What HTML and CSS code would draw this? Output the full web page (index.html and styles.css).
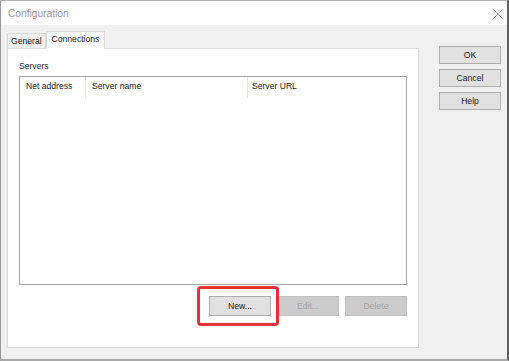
FILE: index.html
```html
<!DOCTYPE html>
<html lang="en">
<head>
    <meta charset="UTF-8">
    <meta name="viewport" content="width=device-width, initial-scale=1.0">
    <title>Configuration</title>
    <link rel="stylesheet" href="styles.css">
</head>
<body>

    <div class="window">
        <div class="titlebar">
            <span class="title">Configuration</span>
            <svg class="close" width="10" height="10" viewBox="0 0 10 10">
                <path d="M0.5 0.5 L9.5 9.5 M9.5 0.5 L0.5 9.5" stroke="#a0a0a0" stroke-width="1" fill="none"/>
            </svg>
        </div>

        <div class="client">
            <div class="left">
                <div class="tabs">
                    <div class="tab">General</div>
                    <div class="tab active">Connections</div>
                </div>
                <div class="panel">
                    <div class="group-label">Servers</div>
                    <div class="listview">
                        <div class="header">
                            <div class="col col-addr">Net address</div>
                            <div class="col col-name">Server name</div>
                            <div class="col col-url">Server URL</div>
                        </div>
                    </div>
                    <div class="list-buttons">
                        <div class="highlight">
                            <button class="btn">New...</button>
                        </div>
                        <button class="btn" disabled>Edit...</button>
                        <button class="btn" disabled>Delete</button>
                    </div>
                </div>
            </div>

            <div class="side-buttons">
                <button class="btn side">OK</button>
                <button class="btn side">Cancel</button>
                <button class="btn side">Help</button>
            </div>
        </div>
    </div>

</body>
</html>
```

FILE: styles.css
```css
body {
    margin: 0;
    background-color: #f0f0f0;
    font-family: "Liberation Sans", Arial, sans-serif;
    font-size: 8.6px;
    color: #1a1a1a;
}
.window {
    width: 509px;
    height: 361px;
    box-sizing: border-box;
    border-left: 1px solid #9a9a9a;
    border-top: 1px solid #b5b5b5;
    border-right: 2px solid #5f5f5f;
    border-bottom: 2px solid #a9a9a9;
    background-color: #f0f0f0;
    display: flex;
    flex-direction: column;
}
.titlebar {
    height: 24px;
    background: #ffffff;
    display: flex;
    align-items: center;
    justify-content: space-between;
    padding: 0 4px 0 7px;
}
.title {
    font-size: 10.2px;
    color: #9a9a9a;
}
.close {
    margin-top: 1px;
}
.client {
    flex: 1;
    display: flex;
    padding: 6px 0 0 6px;
}
.left {
    width: 412px;
    display: flex;
    flex-direction: column;
}
.tabs {
    display: flex;
    align-items: flex-end;
    height: 17px;
}
.tab {
    height: 14px;
    padding: 0 3px;
    line-height: 14px;
    border: 1px solid #d9d9d9;
    border-bottom: none;
    background: #f0f0f0;
}
.tab.active {
    height: 17px;
    line-height: 15px;
    background: #ffffff;
    padding: 0 5px;
    margin-bottom: -1px;
    position: relative;
    z-index: 1;
}
.panel {
    height: 300px;
    box-sizing: border-box;
    background: #ffffff;
    border: 1px solid #d9d9d9;
    padding: 12px 11px 0 11px;
}
.group-label {
    height: 15px;
}
.listview {
    height: 209px;
    box-sizing: border-box;
    border: 1px solid #a6a6a6;
}
.header {
    display: flex;
    height: 21px;
}
.col {
    box-sizing: border-box;
    padding: 4px 0 0 6px;
    border-right: 1px solid #e5e5e5;
}
.col-addr {
    width: 66px;
}
.col-name {
    width: 162px;
}
.col-url {
    border-right: none;
    padding-left: 4px;
}
.list-buttons {
    display: flex;
    justify-content: flex-end;
    gap: 6px;
    margin-top: 11px;
}
.btn {
    width: 62px;
    height: 20px;
    margin: 0;
    padding: 0;
    font-family: inherit;
    font-size: 8.6px;
    color: #1a1a1a;
    background: #e1e1e1;
    border: 1px solid #adadad;
}
.btn:disabled {
    background: #cccccc;
    border-color: #bfbfbf;
    color: #a3a3a3;
}
.highlight {
    position: relative;
}
.highlight::after {
    content: "";
    position: absolute;
    top: -10px;
    left: -12px;
    right: -8px;
    bottom: -10px;
    border: 3px solid #e53138;
    border-radius: 4px;
}
.side-buttons {
    display: flex;
    flex-direction: column;
    gap: 5px;
    padding: 15px 0 0 20px;
}
.btn.side {
    width: 62px;
    height: 18px;
}
```
